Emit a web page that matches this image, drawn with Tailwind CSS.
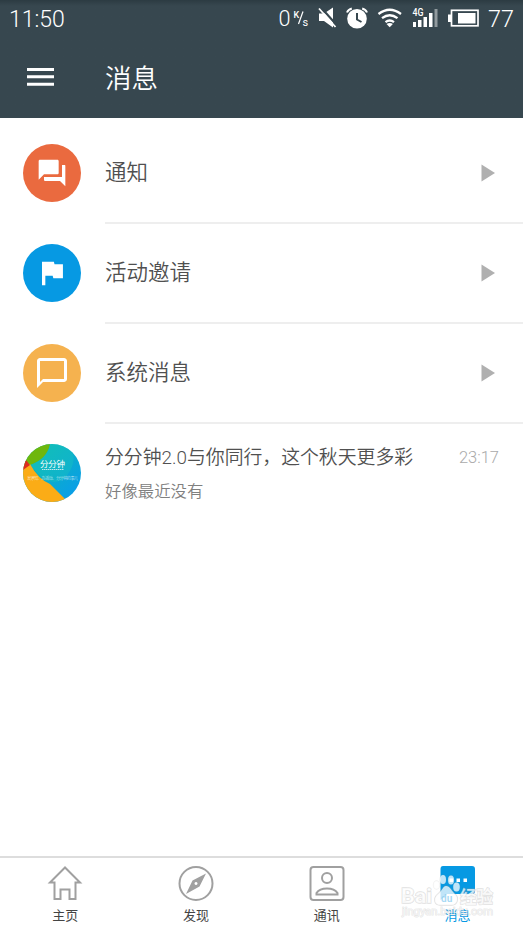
<!DOCTYPE html>
<html lang="zh-CN">
<head>
<meta charset="utf-8">
<title>消息</title>
<script src="https://cdn.jsdelivr.net/npm/@tailwindcss/browser@4"></script>
</head>
<body class="bg-white font-[Roboto,'Noto_Sans_CJK_SC',sans-serif]">
<div class="relative flex h-[931px] w-[523px] flex-col overflow-hidden bg-white font-light">
  <header class="h-[118px] shrink-0 bg-linear-to-b from-[#2c3b42] to-[#37474f] to-5% text-white">
    <div class="flex h-[38px] items-center justify-between pl-[9px]">
      <span class="text-[23px] leading-none">11:50</span>
      <svg class="h-[38px] w-[245px]" viewBox="278 0 245 38" fill="#fff">
        <text x="278.500" y="26" font-size="22" textLength="12" lengthAdjust="spacingAndGlyphs">0</text>
        <text x="293.500" y="17.500" font-size="9" font-weight="500">K</text>
        <path d="M303 11.500L298.500 24" stroke="#fff" stroke-width="1.200"/>
        <text x="302.500" y="25.500" font-size="11" font-weight="400">s</text>
        <path d="M319 13.500h5l9-6v20l-9-6.500h-5z"/>
        <path d="M320.500 7L337.500 26" stroke="#37474f" stroke-width="2.200"/>
        <path d="M319 8.500L335.500 27" stroke="#fff" stroke-width="1.800"/>
        <circle cx="357" cy="18.800" r="9.800"/>
        <path d="M347 12.500q1.200-3 4.800-4M367 12.500q-1.200-3-4.800-4" fill="none" stroke="#fff" stroke-width="2"/>
        <path d="M357 13v6.500l4.500 2.500" fill="none" stroke="#37474f" stroke-width="2"/>
        <g fill="none" stroke="#fff" stroke-width="2.300"><path d="M378.500 14q11.200-8.500 22.500 0"/><path d="M382 18.200q7.700-6 15.500 0"/><path d="M385.500 22.200q4.200-3.300 8.500 0"/></g>
        <path d="M386.500 24q3.200-1.800 6.400 0l-3.200 3.200z"/>
        <text x="412.500" y="15.500" font-size="10" font-weight="500" textLength="11" lengthAdjust="spacingAndGlyphs">4G</text>
        <path d="M413 22h3v5h-3zM418 20h3.500v7h-3.500zM423.500 17h3.500v10h-3.500zM429 13h3.500v14h-3.500z"/>
        <path d="M434.500 9h3v18h-3z" opacity=".45"/>
        <rect x="451.500" y="10.300" width="26.500" height="15.500" fill="none" stroke="#fff" stroke-width="1.700"/>
        <path d="M448 14.500h3v7.500h-3zM458 13h17.500v10.500h-17.500z"/>
        <text x="488" y="26.500" font-size="23" textLength="26" lengthAdjust="spacingAndGlyphs">77</text>
      </svg>
    </div>
    <div class="flex h-[80px] items-center pl-[27px]">
      <svg class="mb-[2px] h-[20px] w-[27px]" viewBox="0 0 27 20" fill="#fff"><path d="M0 1h27v3H0zM0 8.300h27v3H0zM0 15.700h27v3H0z"/></svg>
      <h1 class="ml-[51px] pt-[2px] text-[26.500px] leading-none font-[350]">消息</h1>
    </div>
  </header>

  <main class="flex-1 pt-[6px] text-[#505050]">
    <div class="flex h-[100px] items-center pl-[23px]">
      <div class="mb-[2px] flex size-[58px] items-center justify-center rounded-full bg-[#ea6a3f]">
        <svg class="size-[32px]" viewBox="0 0 24 24" fill="#fff"><path d="M21.500 6h-2v9H6v2c0 .55.45 1 1 1h11l4 4V7c0-.55 0-1-.5-1zm-4.500 6V3c0-.55-.45-1-1-1H3c-.55 0-1 .45-1 1v14l4-4h10c.55 0 1-.45 1-1z"/></svg>
      </div>
      <div class="ml-[24px] flex h-full flex-1 items-center justify-between border-b-2 border-[#eee] pr-[28px] text-[21.500px] font-[350]">通知<svg class="h-[18px] w-[14px]" viewBox="0 0 14 18" fill="#b0b0b0"><path d="M.5.500L14 9 .5 17.500z"/></svg></div>
    </div>
    <div class="flex h-[100px] items-center pl-[23px]">
      <div class="mb-[2px] flex size-[58px] items-center justify-center rounded-full bg-[#0699e3]">
        <svg class="size-[32px]" viewBox="0 0 24 24" fill="#fff"><path d="M13.900 5.500L13.400 3.500H4.500V21.200H7V14h5.500l.5 2h7.200V5.500z"/></svg>
      </div>
      <div class="ml-[24px] flex h-full flex-1 items-center justify-between border-b-2 border-[#eee] pr-[28px] text-[21.500px] font-[350]">活动邀请<svg class="h-[18px] w-[14px]" viewBox="0 0 14 18" fill="#b0b0b0"><path d="M.5.500L14 9 .5 17.500z"/></svg></div>
    </div>
    <div class="flex h-[100px] items-center pl-[23px]">
      <div class="mb-[2px] flex size-[58px] items-center justify-center rounded-full bg-[#f5b24f]">
        <svg class="size-[36px]" viewBox="0 0 24 24" fill="#fff"><path d="M20 2H4c-1.100 0-2 .9-2 2v18l4-4h14c1.100 0 2-.9 2-2V4c0-1.100-.9-2-2-2zm0 14H6l-2 2V4h16v12z"/></svg>
      </div>
      <div class="ml-[24px] flex h-full flex-1 items-center justify-between border-b-2 border-[#eee] pr-[28px] text-[21.500px] font-[350]">系统消息<svg class="h-[18px] w-[14px]" viewBox="0 0 14 18" fill="#b0b0b0"><path d="M.5.500L14 9 .5 17.500z"/></svg></div>
    </div>
    <div class="flex h-[100px] items-center pl-[23px]">
      <svg class="mb-[2px] size-[58px] rounded-full" viewBox="0 0 58 58">
        <defs><linearGradient id="sky" x1="0" y1="0" x2="1" y2="1"><stop offset=".2" stop-color="#0bb9b5"/><stop offset=".85" stop-color="#0a9fe6"/></linearGradient></defs>
        <path d="M0 0h58v58H0z" fill="url(#sky)"/>
        <path d="M27 0Q24 15 7 21L20 35Q38 44 47 27T43 0z" fill="#18c2c2" opacity=".45"/>
        <path d="M0 0h27Q24 15 7 21L0 24z" fill="#6eb70d"/>
        <path d="M7 20Q15 35 27 40L45 58H0V24z" fill="#fbac16"/>
        <path d="M0 17L3 16 7 21 0 26z" fill="#dc2b1f"/>
        <text x="17" y="22.800" font-size="8.500" font-weight="400" fill="#fff" textLength="25">分分钟</text>
        <path d="M19 25.500h22" stroke="#fff" stroke-width="1" stroke-dasharray="1.500 .5" opacity=".7"/>
        <text x="4" y="35.500" font-size="4" fill="#fff" opacity=".8" textLength="51">发通知、办活动、分分钟的事儿</text>
      </svg>
      <div class="ml-[24px] flex flex-1 flex-col pt-[2px] pr-[24px]">
        <div class="flex h-[34px] items-center justify-between whitespace-nowrap"><span class="text-[18.850px] font-[350]">分分钟2.0与你同行，这个秋天更多彩</span><time class="text-[16.500px] text-[#aaa]">23:17</time></div>
        <div class="flex h-[34px] items-center pt-px text-[16.400px] font-[350] text-[#808080]">好像最近没有</div>
      </div>
    </div>
  </main>

  <nav class="grid h-[75px] shrink-0 grid-cols-4 border-t-2 border-[#ddd] text-[13px] font-normal text-[#444]">
    <a class="flex flex-col items-center pt-[7px]">
      <svg class="size-[38px]" viewBox="0 0 38 38" fill="none" stroke="#a0a0a0" stroke-width="2"><path d="M19 2.500L4 17.500H8.500V34h6V24.500h9V34h6V17.500h4.500z"/></svg>
      <span class="mt-[3px] leading-[20px]">主页</span>
    </a>
    <a class="flex flex-col items-center pt-[7px]">
      <svg class="size-[38px]" viewBox="0 0 38 38"><circle cx="19" cy="18.500" r="16.500" fill="none" stroke="#a0a0a0" stroke-width="2"/><path d="M29 8.500L22.500 21.500 9 29 15.500 15.500zM19 17a1.500 1.500 0 1 0 .01 0z" fill="#a0a0a0" fill-rule="evenodd"/></svg>
      <span class="mt-[3px] leading-[20px]">发现</span>
    </a>
    <a class="flex flex-col items-center pt-[7px]">
      <svg class="size-[38px]" viewBox="0 0 38 38" fill="none" stroke="#a0a0a0" stroke-width="2"><rect x="2.500" y="2" width="33" height="33" rx="3"/><circle cx="19" cy="13" r="5"/><path d="M8.500 29.500v-1.500q3-4.500 10.500-4.500t10.500 4.500v1.500z"/></svg>
      <span class="mt-[3px] leading-[20px]">通讯</span>
    </a>
    <a class="flex flex-col items-center pt-[7px] text-[#0699e3]">
      <svg class="size-[38px]" viewBox="0 0 38 38"><path d="M4 1h29q3 0 3 3V26q0 3-3 3H8l-6.500 6V4q0-3 2.500-3z" fill="#0699e3"/><path d="M10.500 13.500h3.500v3.500h-3.500zM17.500 13.500h3.500v3.500h-3.500zM24.500 13.500h3.500v3.500h-3.500z" fill="#fff"/></svg>
      <span class="mt-[3px] leading-[20px]">消息</span>
    </a>
  </nav>

  <svg class="absolute top-[866px] left-[396px] h-[60px] w-[104px]" viewBox="396 866 104 60" fill="#fff" fill-opacity=".75" stroke="#999" stroke-opacity=".3" stroke-width="1.400" paint-order="stroke">
    <text x="401" y="903" font-size="20" font-weight="700" textLength="31" lengthAdjust="spacingAndGlyphs">Bai</text>
    <g stroke-opacity=".15"><ellipse cx="436.500" cy="885" rx="3" ry="4"/><ellipse cx="443" cy="879.500" rx="3" ry="4.500"/><ellipse cx="451" cy="880" rx="3" ry="4.500"/><ellipse cx="456.500" cy="887" rx="3.300" ry="4.500"/></g>
    <path d="M446 886c4 0 5 4 8 7 6 5 3 12-2 12h-12c-6 0-7-7-2-11 4-3 5-8 8-8z"/>
    <text x="441" y="902" font-size="10" font-weight="700" fill="#8bcdf0" stroke="none">du</text>
    <text x="460" y="903" font-size="17" font-weight="700" textLength="33" lengthAdjust="spacingAndGlyphs">经验</text>
    <text x="402" y="915" font-size="10.500" font-weight="400" textLength="91" lengthAdjust="spacingAndGlyphs" fill-opacity=".6" stroke-opacity=".25" stroke-width="1">jingyan.baidu.com</text>
  </svg>
</div>
</body>
</html>
